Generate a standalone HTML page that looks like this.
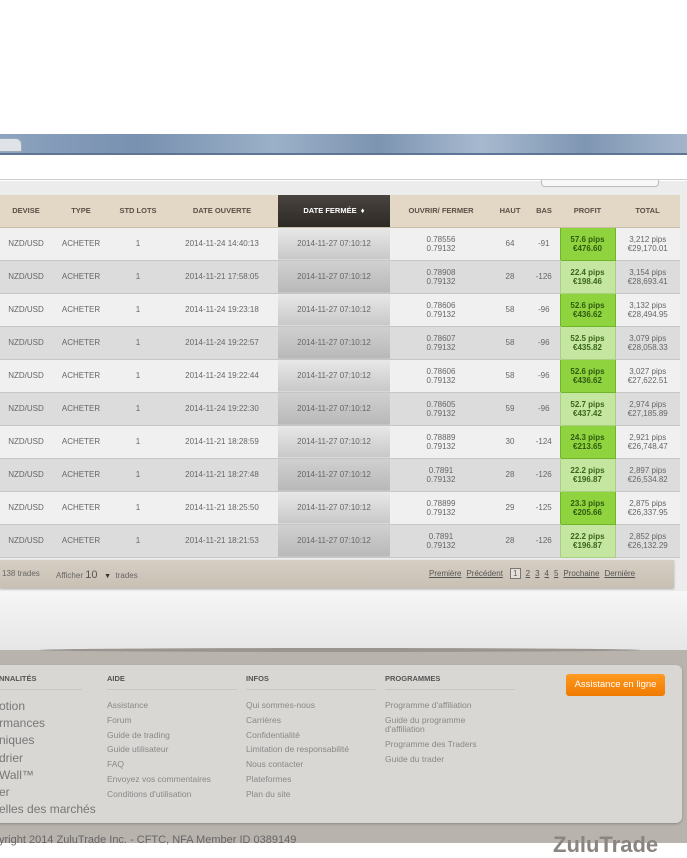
<!DOCTYPE html>
<html><head><meta charset="utf-8">
<style>
*{margin:0;padding:0;box-sizing:border-box}
body{width:687px;height:843px;overflow:hidden;background:#fff;font-family:"Liberation Sans","DejaVu Sans",sans-serif;position:relative}
.abs{position:absolute}
.banner{left:0;top:134px;width:687px;height:21px;background:linear-gradient(90deg,#8da3bf,#7891b0 20%,#9bb0c8 40%,#7d94b1 55%,#a7b9cf 70%,#7f96b3 85%,#a3b5cb);border-bottom:2px solid #5f7596}
.tab{left:-6px;top:138px;width:28px;height:14px;background:#dfe3e8;border-radius:0 6px 0 0;border:1px solid #9aa8ba}
.white{left:0;top:156px;width:687px;height:24px;background:#fff;border-bottom:1px solid #ccc}
.grayarea{left:0;top:181px;width:687px;height:410px;background:#ececec}
.input{left:541px;top:180px;width:118px;height:7px;border:1px solid #bbb;border-top:none;border-radius:0 0 4px 4px;background:#f7f7f7}
table{position:absolute;left:0;top:195px;width:680px;border-collapse:collapse;font-size:8px;color:#666}
th{height:32px;background:#e3d8c6;color:#5a5046;font-size:7.5px;font-weight:bold;text-align:center;border-bottom:1px solid #c9bda9}
th.sel{background:linear-gradient(#4a443f,#2d2925);color:#fff}
td{height:33px;text-align:center;border-bottom:1px solid #c6c6c6;line-height:9px}
tr.o td{background:#f0f0f0}
tr.e td{background:#dcdcdc}
tr.o td.df{background:linear-gradient(#e8e8e8,#c8c8c8)}
tr.e td.df{background:linear-gradient(#d0d0d0,#b8b8b8)}
tr.o td.p{background:#8fd43e;color:#2f5a10;font-weight:bold;border:1px solid #6fb52a}
tr.e td.p{background:#c4e6a0;color:#3a6618;font-weight:bold;border:1px solid #a8d080}
.pager{left:0;top:560px;width:674px;height:28px;background:linear-gradient(#d6cec3,#c9c0b4);font-size:8px;color:#666;box-shadow:0 1px 2px #aaa}
.pager a{color:#555;text-decoration:underline;margin-left:5px}
.shadowzone{left:0;top:591px;width:687px;height:60px;background:linear-gradient(#f6f6f6,#e6e6e6)}
.ftbg{left:0;top:650px;width:687px;height:193px;background:#b8b3ad}
.ftbox{left:-10px;top:665px;width:692px;height:158px;background:#d9d7d4;border-radius:6px;box-shadow:0 1px 2px #888}
.col h4{font-size:7.5px;color:#555;font-weight:bold;padding-bottom:6px;border-bottom:1px solid #c8c6c2;margin-bottom:8px;white-space:nowrap}
.col div{font-size:8.5px;color:#888;line-height:14.8px;white-space:nowrap}
.btn{left:566px;top:674px;width:99px;height:22px;background:linear-gradient(#ff9a22,#f07a00);border-radius:3px;color:#fff;font-size:9.5px;text-align:center;line-height:22px}
</style></head><body>
<div class="abs banner"></div>
<div class="abs tab"></div>
<div class="abs white"></div>
<div class="abs grayarea"></div>
<div class="abs input"></div>
<table>
<colgroup><col style="width:52px"><col style="width:58px"><col style="width:56px"><col style="width:112px"><col style="width:112px"><col style="width:102px"><col style="width:36px"><col style="width:32px"><col style="width:55px"><col style="width:65px"></colgroup>
<tr><th>DEVISE</th><th>TYPE</th><th>STD LOTS</th><th>DATE OUVERTE</th><th class="sel">DATE FERMÉE &nbsp;♦</th><th>OUVRIR/ FERMER</th><th>HAUT</th><th>BAS</th><th>PROFIT</th><th>TOTAL</th></tr>
<tr class="o"><td>NZD/USD</td><td>ACHETER</td><td>1</td><td>2014-11-24 14:40:13</td><td class="df">2014-11-27 07:10:12</td><td>0.78556<br>0.79132</td><td>64</td><td>-91</td><td class="p">57.6 pips<br>€476.60</td><td>3,212 pips<br>€29,170.01</td></tr>
<tr class="e"><td>NZD/USD</td><td>ACHETER</td><td>1</td><td>2014-11-21 17:58:05</td><td class="df">2014-11-27 07:10:12</td><td>0.78908<br>0.79132</td><td>28</td><td>-126</td><td class="p">22.4 pips<br>€198.46</td><td>3,154 pips<br>€28,693.41</td></tr>
<tr class="o"><td>NZD/USD</td><td>ACHETER</td><td>1</td><td>2014-11-24 19:23:18</td><td class="df">2014-11-27 07:10:12</td><td>0.78606<br>0.79132</td><td>58</td><td>-96</td><td class="p">52.6 pips<br>€436.62</td><td>3,132 pips<br>€28,494.95</td></tr>
<tr class="e"><td>NZD/USD</td><td>ACHETER</td><td>1</td><td>2014-11-24 19:22:57</td><td class="df">2014-11-27 07:10:12</td><td>0.78607<br>0.79132</td><td>58</td><td>-96</td><td class="p">52.5 pips<br>€435.82</td><td>3,079 pips<br>€28,058.33</td></tr>
<tr class="o"><td>NZD/USD</td><td>ACHETER</td><td>1</td><td>2014-11-24 19:22:44</td><td class="df">2014-11-27 07:10:12</td><td>0.78606<br>0.79132</td><td>58</td><td>-96</td><td class="p">52.6 pips<br>€436.62</td><td>3,027 pips<br>€27,622.51</td></tr>
<tr class="e"><td>NZD/USD</td><td>ACHETER</td><td>1</td><td>2014-11-24 19:22:30</td><td class="df">2014-11-27 07:10:12</td><td>0.78605<br>0.79132</td><td>59</td><td>-96</td><td class="p">52.7 pips<br>€437.42</td><td>2,974 pips<br>€27,185.89</td></tr>
<tr class="o"><td>NZD/USD</td><td>ACHETER</td><td>1</td><td>2014-11-21 18:28:59</td><td class="df">2014-11-27 07:10:12</td><td>0.78889<br>0.79132</td><td>30</td><td>-124</td><td class="p">24.3 pips<br>€213.65</td><td>2,921 pips<br>€26,748.47</td></tr>
<tr class="e"><td>NZD/USD</td><td>ACHETER</td><td>1</td><td>2014-11-21 18:27:48</td><td class="df">2014-11-27 07:10:12</td><td>0.7891<br>0.79132</td><td>28</td><td>-126</td><td class="p">22.2 pips<br>€196.87</td><td>2,897 pips<br>€26,534.82</td></tr>
<tr class="o"><td>NZD/USD</td><td>ACHETER</td><td>1</td><td>2014-11-21 18:25:50</td><td class="df">2014-11-27 07:10:12</td><td>0.78899<br>0.79132</td><td>29</td><td>-125</td><td class="p">23.3 pips<br>€205.66</td><td>2,875 pips<br>€26,337.95</td></tr>
<tr class="e"><td>NZD/USD</td><td>ACHETER</td><td>1</td><td>2014-11-21 18:21:53</td><td class="df">2014-11-27 07:10:12</td><td>0.7891<br>0.79132</td><td>28</td><td>-126</td><td class="p">22.2 pips<br>€196.87</td><td>2,852 pips<br>€26,132.29</td></tr>
</table>
<div class="abs pager">
<span class="abs" style="left:2px;top:9px">138 trades</span>
<span class="abs" style="left:56px;top:9px">Afficher <span style="font-size:11px;color:#555">10</span> &nbsp; <span style="font-size:7px;color:#333">▼</span> &nbsp;trades</span>
<span class="abs" style="left:424px;top:9px"><a>Première</a><a>Précédent</a> <span style="border:1px solid #777;padding:0 2px;margin-left:5px;background:#e6e0d8">1</span><a>2</a><a>3</a><a>4</a><a>5</a><a>Prochaine</a><a>Dernière</a></span>
</div>
<div class="abs shadowzone"></div>
<div class="abs ftbg"></div>
<div class="abs" style="left:40px;top:648px;width:600px;height:4px;background:#9a958f;border-radius:50%"></div>
<div class="abs ftbox"></div>
<div class="abs col" style="left:-1px;top:674px;width:83px"><h4>NNALITÉS</h4><div style="font-size:12px;color:#777;line-height:17.2px">otion<br>rmances<br>niques<br>drier<br>Wall™<br>er<br>elles des marchés</div></div>
<div class="abs col" style="left:107px;top:674px;width:130px"><h4>AIDE</h4><div>Assistance<br>Forum<br>Guide de trading<br>Guide utilisateur<br>FAQ<br>Envoyez vos commentaires<br>Conditions d'utilisation</div></div>
<div class="abs col" style="left:246px;top:674px;width:130px"><h4>INFOS</h4><div>Qui sommes-nous<br>Carrières<br>Confidentialité<br>Limitation de responsabilité<br>Nous contacter<br>Plateformes<br>Plan du site</div></div>
<div class="abs col" style="left:385px;top:674px;width:130px"><h4>PROGRAMMES</h4><div>Programme d'affiliation<br><span style="display:inline-block;line-height:9px;margin:3px 0">Guide du programme<br>d'affiliation</span><br>Programme des Traders<br>Guide du trader</div></div>
<div class="abs btn">Assistance en ligne</div>
<div class="abs" style="left:-1px;top:834px;font-size:11px;color:#666;white-space:nowrap">yright 2014 ZuluTrade Inc. - CFTC, NFA Member ID 0389149</div>
<div class="abs" style="left:553px;top:832px;font-size:22px;font-weight:bold;color:#8a8580;white-space:nowrap">ZuluTrade</div>
</body></html>
